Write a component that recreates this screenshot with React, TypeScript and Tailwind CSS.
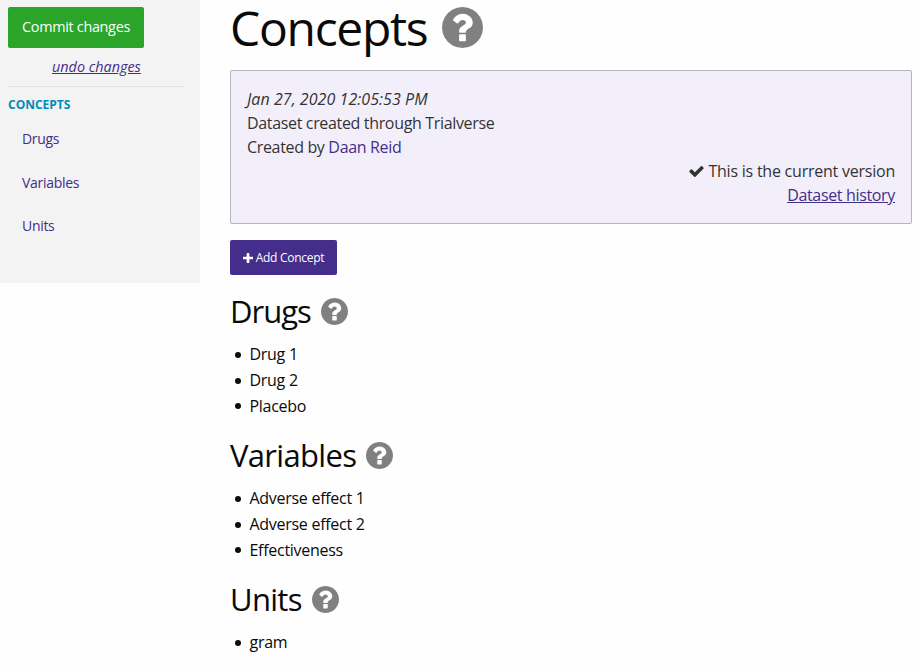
import React from "react";

function HelpIcon({ className }: { className: string }) {
  return (
    <svg viewBox="128 128 1536 1536" className={className} fill="#808080">
      <path d="M1024 1376v-192q0-14-9-23t-23-9h-192q-14 0-23 9t-9 23v192q0 14 9 23t23 9h192q14 0 23-9t9-23zm256-672q0-88-55.5-163t-138.5-116-170-41q-243 0-371 213-15 24 8 42l132 100q7 6 19 6 16 0 25-12 53-68 86-92 34-24 86-24 48 0 85.5 26t37.5 59q0 38-20 61t-68 45q-63 28-115.5 86.5t-52.5 125.5v36q0 14 9 23t23 9h192q14 0 23-9t9-23q0-19 21.5-49.5t54.5-49.5q32-18 49-28.5t46-35 44.5-48 28-60.5 12.5-81zm384 192q0 209-103 385.5t-279.5 279.5-385.5 103-385.5-103-279.5-279.5-103-385.5 103-385.5 279.5-279.5 385.5-103 385.5 103 279.5 279.5 103 385.5z" />
    </svg>
  );
}

function CheckIcon() {
  return (
    <svg viewBox="121 334 1550 1188" className="h-[11px] w-[15px]" fill="#333333">
      <path d="M1671 566q0 40-28 68l-724 724-136 136q-28 28-68 28t-68-28l-136-136-362-362q-28-28-28-68t28-68l136-136q28-28 68-28t68 28l294 295 656-657q28-28 68-28t68 28l136 136q28 28 28 68z" />
    </svg>
  );
}

function PlusIcon() {
  return (
    <svg viewBox="192 128 1408 1408" className="size-[10px]" fill="#ffffff">
      <path d="M1600 736v192q0 40-28 68t-68 28h-416v416q0 40-28 68t-68 28h-192q-40 0-68-28t-28-68v-416h-416q-40 0-68-28t-28-68v-192q0-40 28-68t68-28h416v-416q0-40 28-68t68-28h192q40 0 68 28t28 68v416h416q40 0 68 28t28 68z" />
    </svg>
  );
}

function Section({ title, spacing, items }: { title: string; spacing: string; items: string[] }) {
  return (
    <section className="mb-[14.8px]">
      <h3 className="flex h-[43px] items-center gap-[10px] text-[31px] leading-[43px]">
        <span className={spacing}>{title}</span>
        <HelpIcon className="size-[27px]" />
      </h3>
      <ul className="mt-[9.4px] text-base leading-[25.6px] tracking-[-0.28px]">
        {items.map((item) => (
          <li key={item} className="flex items-center">
            <span className="mr-[8.5px] ml-[5px] size-[6px] rounded-full bg-[#0a0a0a]" />
            {item}
          </li>
        ))}
      </ul>
    </section>
  );
}

export default function App() {
  return (
    <div className="flex items-start bg-[#fefefe] font-['Open_Sans','Noto_Sans',sans-serif] text-[#0a0a0a]">
      <aside className="h-[283px] w-[200px] shrink-0 bg-[#f3f3f3] pt-[7px] pr-4 pl-2">
        <button className="flex h-[41px] w-[136px] items-center justify-center rounded-[2px] bg-[#2aa52a] pb-0.5 text-[14.4px] tracking-[-0.3px] text-[#fefefe]">
          Commit changes
        </button>
        <div className="mt-[7px] pl-11 text-[14.4px] leading-6 text-[#442d8b] italic underline">
          undo changes
        </div>
        <hr className="mt-[7px] border-[#e2e2e2]" />
        <h4 className="mt-[7px] text-xs leading-[22px] font-bold text-[#008cba]">CONCEPTS</h4>
        <nav className="mt-[1.2px] flex flex-col pl-[14px] text-sm leading-[43.4px] tracking-[-0.3px] text-[#442d8b]">
          <a>Drugs</a>
          <a>Variables</a>
          <a>Units</a>
        </nav>
      </aside>

      <main className="w-[712px] shrink-0 pl-[30px]">
        <h1 className="flex h-[55px] items-center gap-[15px] text-[48px] leading-[55px]">
          <span className="tracking-[-1.3px]">Concepts</span>
          <HelpIcon className="size-[41px]" />
        </h1>
        <div className="mt-[15px] h-[154px] rounded-[2px] border border-[#b7b4c0] bg-[#f3effa] p-4 text-base leading-6 tracking-[-0.34px] text-[#333333]">
          <div className="tracking-[0.05px] italic">Jan 27, 2020 12:05:53 PM</div>
          <div>Dataset created through Trialverse</div>
          <div>
            Created by <a className="text-[#442d8b]">Daan Reid</a>
          </div>
          <div className="flex items-center justify-end gap-1">
            <CheckIcon />
            <span className="tracking-[-0.23px]">This is the current version</span>
          </div>
          <div className="text-right">
            <a className="text-[#442d8b] underline">Dataset history</a>
          </div>
        </div>
        <button className="mt-4 mb-[15px] flex h-[35px] w-[107px] items-center justify-center gap-[3px] rounded-[2px] bg-[#442d8b] text-xs tracking-[-0.27px] text-[#fefefe]">
          <PlusIcon />
          <span>Add Concept</span>
        </button>
        <Section title="Drugs" spacing="tracking-[-1px]" items={["Drug 1", "Drug 2", "Placebo"]} />
        <Section
          title="Variables"
          spacing="tracking-[-0.68px]"
          items={["Adverse effect 1", "Adverse effect 2", "Effectiveness"]}
        />
        <Section title="Units" spacing="tracking-[-0.7px]" items={["gram"]} />
      </main>
    </div>
  );
}
